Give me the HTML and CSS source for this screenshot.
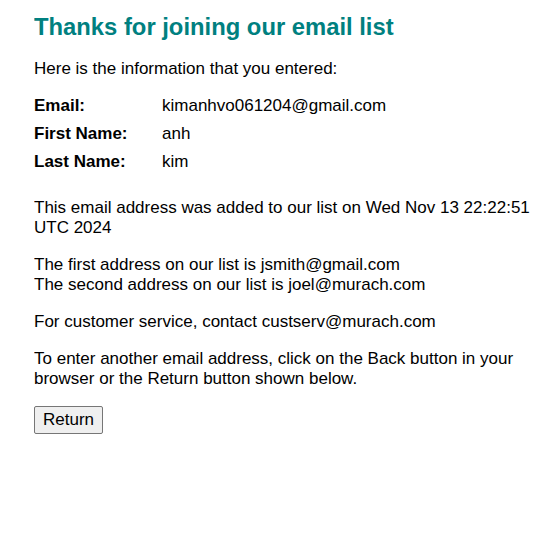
FILE: index.html
```html
<!DOCTYPE html>
<html>
<head>
<meta charset="utf-8">
<title>Murach's Java Servlets and JSP</title>
<link rel="stylesheet" href="styles.css">
</head>
<body>
<h1>Thanks for joining our email list</h1>
<p class="intro">Here is the information that you entered:</p>
<div class="info">
  <div class="row"><label>Email:</label><span>kimanhvo061204@gmail.com</span></div>
  <div class="row"><label>First Name:</label><span>anh</span></div>
  <div class="row"><label>Last Name:</label><span>kim</span></div>
</div>
<p>This email address was added to our list on Wed Nov 13 22:22:51 UTC 2024</p>
<p>The first address on our list is jsmith@gmail.com<br>
The second address on our list is joel@murach.com</p>
<p>For customer service, contact custserv@murach.com</p>
<p>To enter another email address, click on the Back button in your browser or the Return button shown below.</p>
<form class="actions">
  <button type="button" class="btn">Return</button>
</form>
</body>
</html>
```
FILE: styles.css
```css
body {
  font-family: "Liberation Sans", Arial, sans-serif;
  font-size: 17px;
  line-height: 20px;
  margin: 8px 8px 8px 34px;
  color: #000;
}
h1 {
  color: #008080;
  font-size: 23.8px;
  line-height: 28px;
  margin: 5px 0 18px;
}
p {
  margin: 0 0 17px;
}
.intro {
  margin-bottom: 17px;
}
.info {
  display: flex;
  flex-direction: column;
  gap: 8px;
  margin-bottom: 26px;
}
.row {
  display: flex;
}
.row label {
  width: 128px;
  font-weight: bold;
}
.actions {
  margin: 0;
}
.btn {
  font-family: "Liberation Sans", Arial, sans-serif;
  font-size: 17px;
  line-height: 20px;
  padding: 3px 8px;
  border: 1px solid #767676;
  border-radius: 2px;
  background: #efefef;
  color: #000;
}
```
